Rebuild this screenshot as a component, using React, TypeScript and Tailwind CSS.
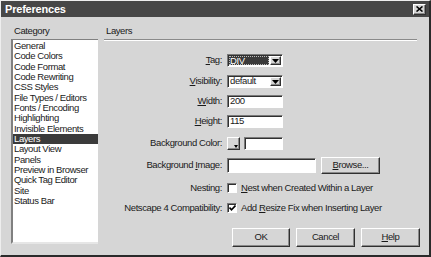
import React from "react";

const categories = [
  "General",
  "Code Colors",
  "Code Format",
  "Code Rewriting",
  "CSS Styles",
  "File Types / Editors",
  "Fonts / Encoding",
  "Highlighting",
  "Invisible Elements",
  "Layers",
  "Layout View",
  "Panels",
  "Preview in Browser",
  "Quick Tag Editor",
  "Site",
  "Status Bar",
];

const raised =
  "border border-t-white border-l-white border-r-[#303030] border-b-[#303030] shadow-[inset_-1px_-1px_0_#8a8a8a] bg-[#d6d6d6]";
const sunken =
  "border border-t-[#7a7a7a] border-l-[#7a7a7a] border-r-white border-b-white shadow-[inset_1px_1px_0_#303030] bg-white";

const Arrow = () => (
  <div className={`w-[11px] h-full flex items-center justify-center ${raised}`}>
    <svg width="7" height="4" viewBox="0 0 7 4">
      <path d="M0 0h7L3.5 4z" fill="#000" />
    </svg>
  </div>
);

const Label = ({ text, u }: { text: string; u?: number }) => {
  if (u === undefined) return <span>{text}</span>;
  return (
    <span>
      {text.slice(0, u)}
      <span className="underline underline-offset-1">{text[u]}</span>
      {text.slice(u + 1)}
    </span>
  );
};

const Row = ({
  label,
  u,
  mt,
  h,
  children,
}: {
  label: string;
  u?: number;
  mt: string;
  h: string;
  children: React.ReactNode;
}) => (
  <div className={`flex items-center ${mt} ${h}`}>
    <div className="w-[119px] text-right pr-[1px] whitespace-nowrap">
      <Label text={label} u={u} />
    </div>
    <div className="ml-[4px] flex items-center h-full">{children}</div>
  </div>
);

export default function App() {
  return (
    <div className="w-[431px] h-[257px] bg-[#d6d6d6] border-r-2 border-b-2 border-r-[#2a2a2a] border-b-[#2a2a2a] border-t border-l border-t-[#eeeeee] border-l-[#eeeeee] flex flex-col text-[9.5px] tracking-[-0.4px] text-[#1a1a1a] font-['Liberation_Sans',Arial,sans-serif] overflow-hidden">
      {/* title bar */}
      <div className="h-[16px] bg-[#474747] flex items-center justify-between pl-[4px] pr-[3px]">
        <span className="text-white font-bold text-[11px] tracking-[-0.2px]">Preferences</span>
        <div className={`w-[13px] h-[11px] flex items-center justify-center ${raised}`}>
          <svg width="7" height="6" viewBox="0 0 7 6">
            <path d="M0.5 0.5L6.5 5.5M6.5 0.5L0.5 5.5" stroke="#000" strokeWidth="1.6" />
          </svg>
        </div>
      </div>

      <div className="flex flex-1">
        {/* category column */}
        <div className="w-[101px] pl-[10px] pt-[8px]">
          <div className="h-[12px] leading-[12px] pl-[3px]">Category</div>
          <div className="mt-[2px] w-[87px] h-[205px] bg-white border-l-2 border-t border-l-[#808080] border-t-[#808080] border-b-2 border-b-[#e6e6e6] pt-[1px]">
            {categories.map((c) => (
              <div
                key={c}
                className={`h-[10.33px] leading-[10.33px] pl-[1px] whitespace-nowrap ${
                  c === "Layers" ? "bg-[#3b3b3b] text-white" : ""
                }`}
              >
                {c}
              </div>
            ))}
          </div>
        </div>

        {/* settings panel */}
        <div className="w-[318px] pl-[2px] pt-[8px]">
          <div className="h-[12px] leading-[12px] pl-[2px]">Layers</div>
          <div className="mt-[2px] mr-[3px] border-t border-b border-t-[#8a8a8a] border-b-white" />

          <Row label="Tag:" u={0} mt="mt-[13px]" h="h-[13px]">
            <div className={`w-[56px] h-full flex items-stretch p-[1px] ${sunken}`}>
              <div className="flex-1 flex items-center">
                <span className="bg-[#3b3b3b] text-white w-[40px] h-full leading-[9px] pl-[1px] outline outline-1 outline-dotted outline-[#bbbbbb] -outline-offset-1">
                  DIV
                </span>
              </div>
              <Arrow />
            </div>
          </Row>

          <Row label="Visibility:" u={0} mt="mt-[8px]" h="h-[13px]">
            <div className={`w-[56px] h-full flex items-stretch p-[1px] ${sunken}`}>
              <div className="flex-1 flex items-center pl-[1px]">default</div>
              <Arrow />
            </div>
          </Row>

          <Row label="Width:" u={0} mt="mt-[7px]" h="h-[13px]">
            <div className={`w-[56px] h-full flex items-center pl-[2px] ${sunken}`}>200</div>
          </Row>

          <Row label="Height:" u={0} mt="mt-[7px]" h="h-[13px]">
            <div className={`w-[56px] h-full flex items-center pl-[2px] ${sunken}`}>115</div>
          </Row>

          <Row label="Background Color:" mt="mt-[9px]" h="h-[13px]">
            <div className={`w-[13px] h-full relative ${raised}`}>
              <svg className="absolute right-[1px] bottom-[1px]" width="4" height="3" viewBox="0 0 4 3">
                <path d="M0 0h4L2 3z" fill="#000" />
              </svg>
            </div>
            <div className={`ml-[4px] w-[39px] h-full ${sunken}`} />
          </Row>

          <Row label="Background Image:" u={11} mt="mt-[7px]" h="h-[17px]">
            <div className={`w-[89px] h-[15px] ${sunken}`} />
            <div className={`ml-[5px] w-[59px] h-full flex items-center justify-center ${raised}`}>
              <Label text="Browse..." u={0} />
            </div>
          </Row>

          <Row label="Nesting:" mt="mt-[9px]" h="h-[10px]">
            <div className={`w-[10px] h-[10px] ${sunken}`} />
            <span className="ml-[4px] whitespace-nowrap">
              <Label text="Nest when Created Within a Layer" u={0} />
            </span>
          </Row>

          <Row label="Netscape 4 Compatibility:" mt="mt-[10px]" h="h-[10px]">
            <div className={`w-[10px] h-[10px] flex items-center justify-center ${sunken}`}>
              <svg width="7" height="6" viewBox="0 0 7 6">
                <path d="M0.5 2.5L2.5 4.8L6.5 0.5" stroke="#000" strokeWidth="1.6" fill="none" />
              </svg>
            </div>
            <span className="ml-[4px] whitespace-nowrap">
              Add <Label text="Resize" u={0} /> Fix when Inserting Layer
            </span>
          </Row>

          <div className="mt-[15px] h-[19px] flex justify-end gap-[6px]">
            <div className={`w-[58px] h-full flex items-center justify-center ${raised}`}>OK</div>
            <div className={`w-[59px] h-full flex items-center justify-center ${raised}`}>Cancel</div>
            <div className={`w-[59px] h-full flex items-center justify-center ${raised}`}>
              <Label text="Help" u={0} />
            </div>
          </div>
        </div>
      </div>
    </div>
  );
}
